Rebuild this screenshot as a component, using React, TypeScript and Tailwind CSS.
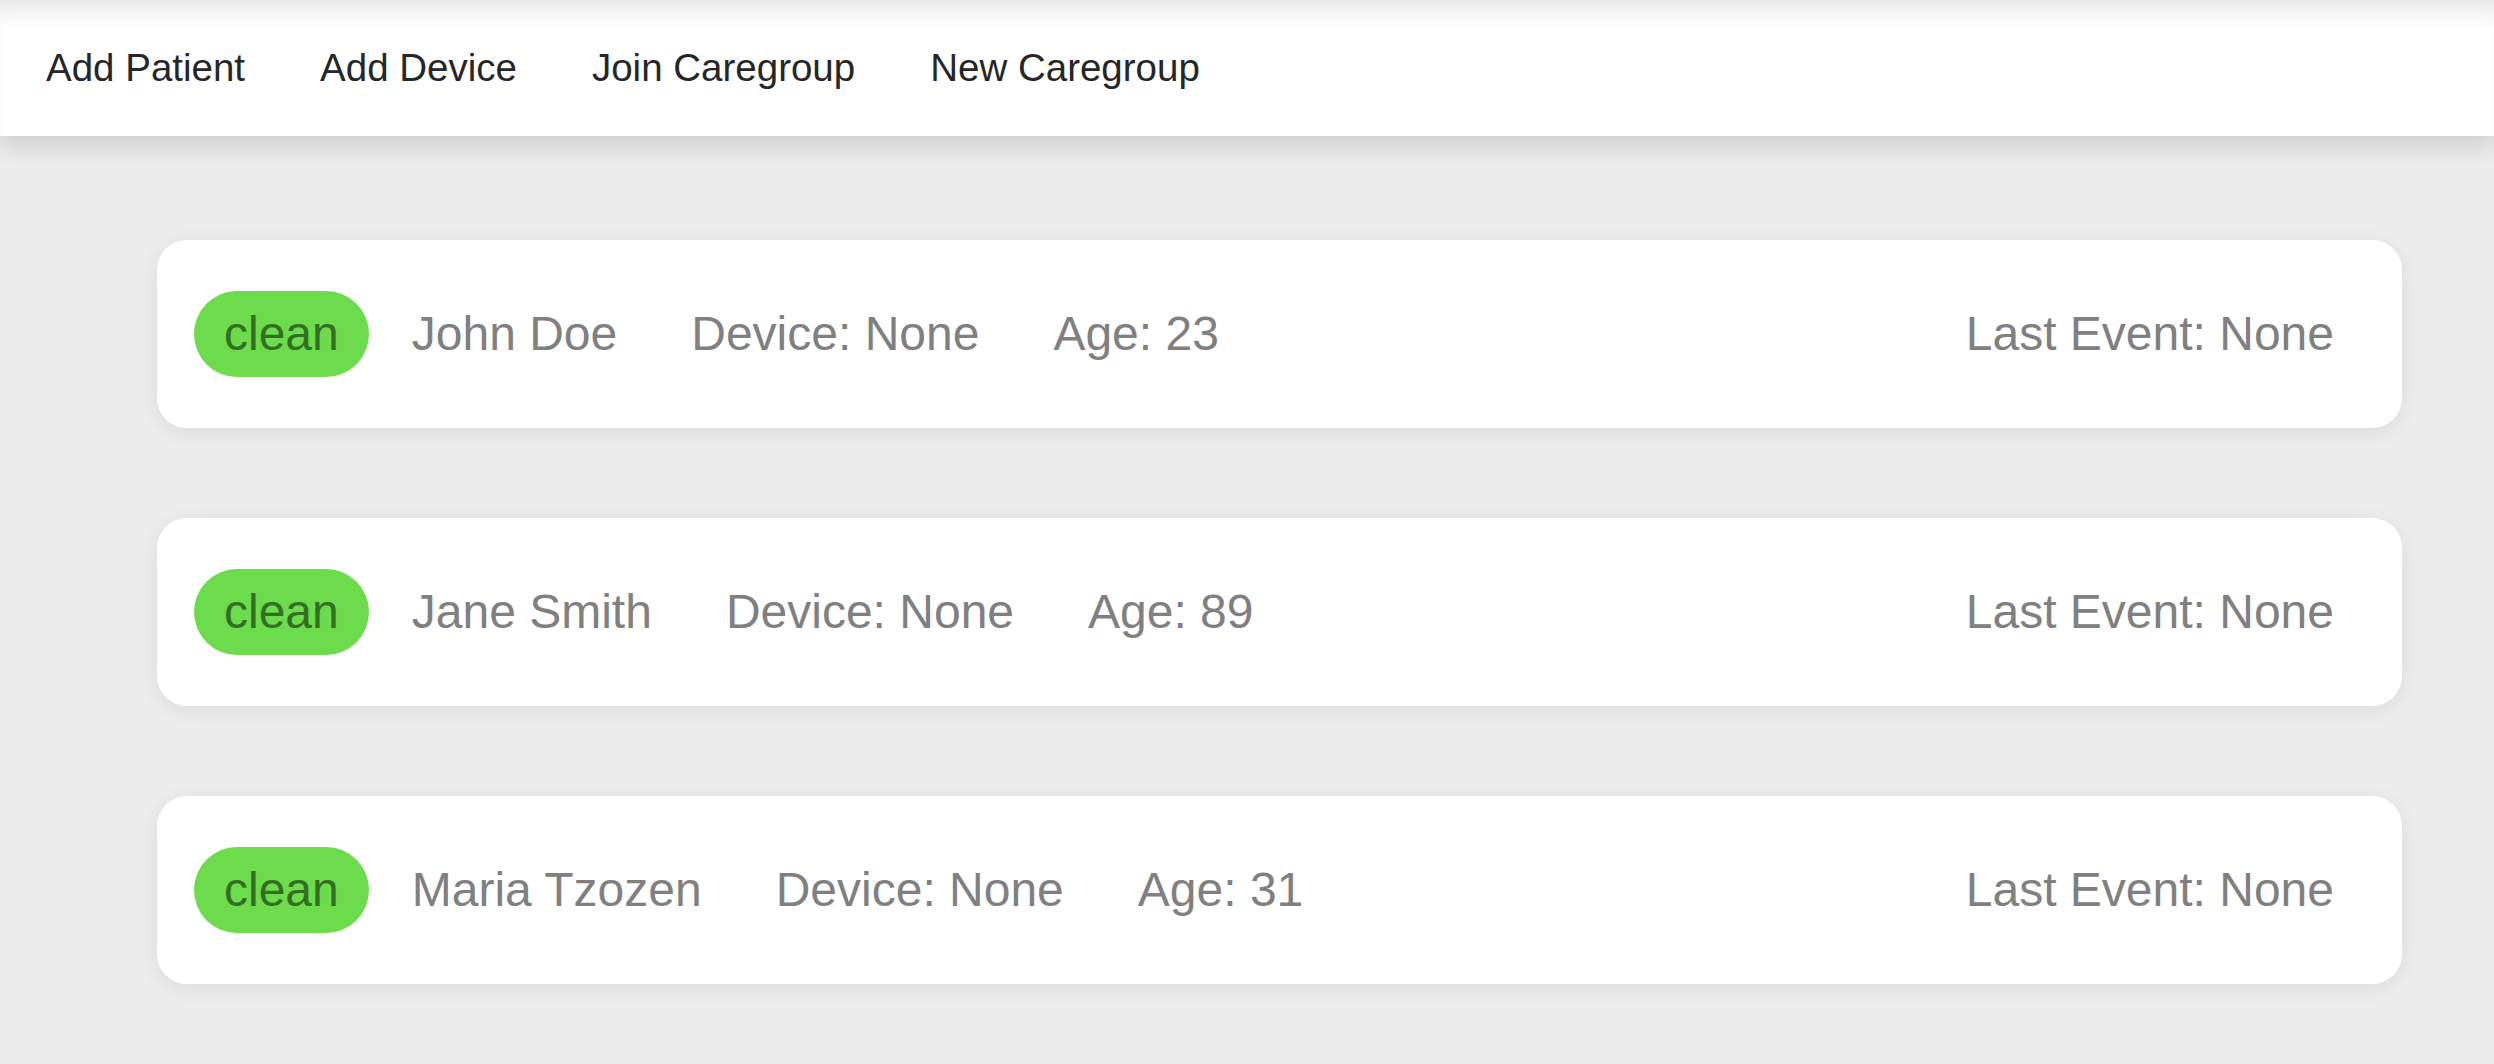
import React from 'react';

const patients = [
  { name: 'John Doe', device: 'None', age: 23, lastEvent: 'None' },
  { name: 'Jane Smith', device: 'None', age: 89, lastEvent: 'None' },
  { name: 'Maria Tzozen', device: 'None', age: 31, lastEvent: 'None' },
];

const navItems = ['Add Patient', 'Add Device', 'Join Caregroup', 'New Caregroup'];

const App: React.FC = () => {
  return (
    <div className="min-h-screen bg-[#ececec] font-['Liberation_Sans',Arial,sans-serif]">
      {/* Top nav */}
      <nav className="relative z-10 h-[136px] bg-white flex items-center pl-[46px] gap-[75px] shadow-[inset_0_24px_22px_-14px_rgba(0,0,0,0.1),0_10px_22px_rgba(0,0,0,0.13)]">
        {navItems.map((item) => (
          <span key={item} className="text-[38.5px] text-[#262626] leading-none">
            {item}
          </span>
        ))}
      </nav>

      {/* Patient list */}
      <div className="ml-[157px] w-[2245px] pt-[104px] flex flex-col gap-[90px]">
        {patients.map((p) => (
          <div
            key={p.name}
            className="h-[188px] bg-white rounded-[30px] flex items-center pl-[37px] pr-[68px] shadow-[0_4px_22px_rgba(0,0,0,0.07)]"
          >
            <span className="h-[86px] px-[30px] rounded-[43px] bg-[#6cdc4c] text-[#336e22] text-[48px] flex items-center leading-none">
              clean
            </span>
            <div className="flex items-center gap-[74px] ml-[43px] text-[48px] text-[#808080] leading-none">
              <span>{p.name}</span>
              <span>Device: {p.device}</span>
              <span>Age: {p.age}</span>
            </div>
            <span className="ml-auto text-[48px] text-[#808080] leading-none">Last Event: {p.lastEvent}</span>
          </div>
        ))}
      </div>
    </div>
  );
};

export default App;
